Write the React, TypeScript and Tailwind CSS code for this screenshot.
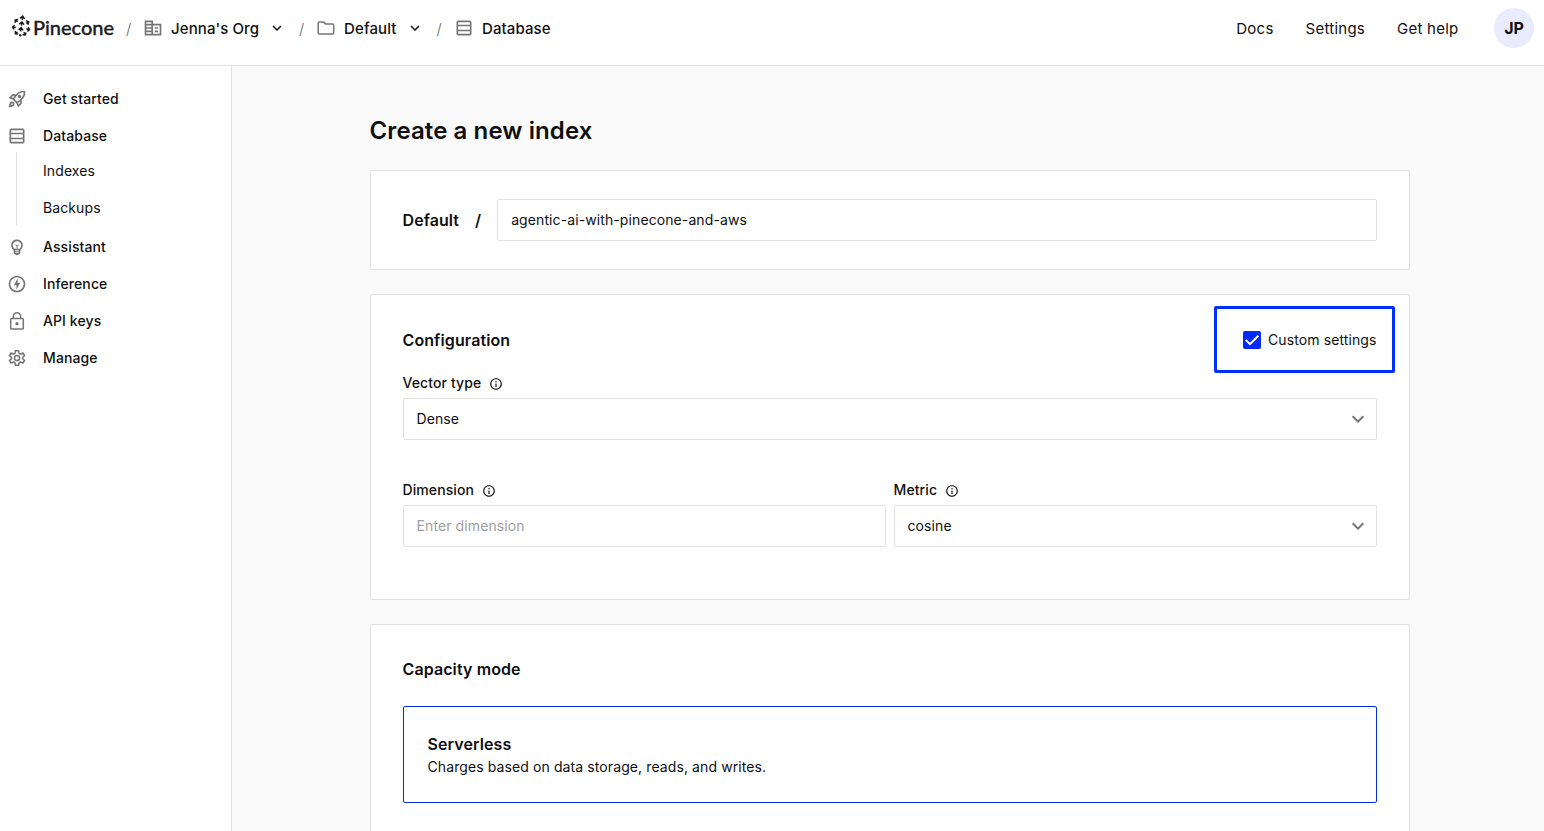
import type { ReactNode } from "react";
import {
  MdOutlineCorporateFare,
  MdOutlineTableRows,
  MdKeyboardArrowDown,
  MdOutlineRocketLaunch,
  MdOutlineEmojiObjects,
  MdOutlineOfflineBolt,
  MdInfoOutline,
} from "react-icons/md";

function Logo() {
  return (
    <div className="-mt-[2px] flex items-center">
      <svg width="20" height="22" viewBox="0 0 20 22" fill="none" stroke="#1c1c1f" strokeWidth="1.5" className="-mt-[2px] shrink-0">
        <path d="M11.2 4.8 L11.6 1.6 M9 3.3 L11.7 1.2 L13.6 3.9" />
        <path d="M10.5 10.6 L10.9 7.4 M8.3 9.2 L11 7 L13 9.6" />
        <path d="M9.6 16.4 L10 13.2 M7.6 14.8 L10.200 12.700 L12.100 15.400" />
        <path d="M6.6 7 L4.800 5.300 M4.100 7.900 L4.300 4.900 L7.200 4.600" />
        <path d="M15.200 8.400 L17.300 7.200 M14.900 5.600 L17.700 6.900 L16.800 9.800" />
        <path d="M4.800 12.600 L2.200 12.200 M3.600 10.200 L1.700 12.200 L2.900 14.500" />
        <path d="M15.300 13.800 L18 14.500 M17.200 12 L18.500 14.600 L16.400 16.300" />
        <path d="M6.500 16.800 L4.800 18.500 M4.300 15.900 L4.400 18.800 L7.200 18.900" />
        <path d="M12.900 17.300 L13.900 19.500 M11.600 19.700 L14.200 19.900 L15 17.500" />
        <circle cx="9.200" cy="20.300" r="1.2" fill="#1c1c1f" stroke="none" />
      </svg>
      <span className="ml-[2px] w-[81px] font-['Lato'] text-[20px] leading-6 font-medium tracking-[-0.03px] whitespace-nowrap text-[#1c1c1f] [-webkit-text-stroke:0.35px_#1c1c1f]">
        Pinecone
      </span>
    </div>
  );
}

function FolderIcon() {
  return (
    <svg width="20" height="20" viewBox="0 0 20 20" fill="none" stroke="#757575" strokeWidth="1.5" strokeLinejoin="round" className="-mt-[1px]">
      <path d="M3.100 4.100h4.500l1.800 1.800h7.300c.6 0 1 .4 1 1v8.100c0 .6-.4 1-1 1H3.100c-.5 0-.9-.4-.9-1V5c0-.5.4-.9.9-.9z" />
    </svg>
  );
}

function LockIcon() {
  return (
    <svg width="20" height="20" viewBox="0 0 20 20" fill="none" stroke="currentColor" strokeWidth="1.5">
      <rect x="3.700" y="7.600" width="12.600" height="10.400" rx="0.800" />
      <path d="M6.300 7.600V5.400a3.700 3.700 0 0 1 7.400 0v2.200" />
      <circle cx="10" cy="12.700" r="1.600" fill="currentColor" stroke="none" />
    </svg>
  );
}

function GearIcon() {
  return (
    <svg width="20" height="20" viewBox="-0.7 -0.7 21.4 21.4" fill="none" stroke="currentColor" strokeWidth="1.65" strokeLinejoin="round">
      <path d="M8.300 2.200h3.400l.3 1.900q.2 1 1.100 1.300.8.400 1.600 0l1.700-.8 1.700 2.900-1.500 1.100q-.8.600-.8 1.400t.8 1.400l1.500 1.100-1.700 2.900-1.700-.8q-.8-.4-1.600 0-.9.300-1.100 1.300l-.3 1.900H8.300L8 15.900q-.2-1-1.100-1.300-.8-.4-1.600 0l-1.700.8-1.700-2.900 1.500-1.100q.8-.6.8-1.400t-.8-1.400L1.900 7.500l1.700-2.900 1.700.8q.8.400 1.600 0Q7.800 5.100 8 4.100z" />
      <circle cx="10" cy="10" r="2.700" />
    </svg>
  );
}

function NavItem({ icon, label }: { icon: ReactNode; label: string }) {
  return (
    <a className="flex h-[37px] items-center pl-[7px] text-sm font-medium tracking-[0.1px]">
      <span className="mr-4 flex size-5 items-center justify-center text-[#757575]">{icon}</span>
      {label}
    </a>
  );
}

function Slash() {
  return <span className="text-[15px] font-light text-[#666]">/</span>;
}

function FieldLabel({ children }: { children: ReactNode }) {
  return (
    <div className="-ml-[0.5px] flex h-5 items-center gap-2 text-sm font-medium tracking-[0.1px]">
      {children}
      <MdInfoOutline size={14} className="mt-[2px]" />
    </div>
  );
}

function SelectBox({ value }: { value: string }) {
  return (
    <div className="mt-[5px] flex h-[42px] items-center justify-between rounded-[2px] border border-[#e2e2e2] bg-white pr-[6px] pl-[12.5px] text-sm tracking-[0.1px]">
      {value}
      <MdKeyboardArrowDown size={24} className="text-[#757575]" />
    </div>
  );
}

export default function App() {
  return (
    <div className="flex h-[831px] w-[1544px] flex-col overflow-hidden bg-[#fafafa] font-['Inter',sans-serif] text-[#0f0f10]">
      <header className="flex h-[66px] shrink-0 items-start justify-between border-b border-[#e2e2e2] bg-white pr-[10px] pl-[11px]">
        <nav className="flex h-14 items-center text-[15px] font-medium tracking-[0.1px]">
          <Logo />
          <div className="mt-[2px] ml-[12px] flex w-[17px]"><Slash /></div>
          <MdOutlineCorporateFare size={20} className="text-[#757575]" />
          <span className="mt-[2px] ml-2">Jenna's Org</span>
          <MdKeyboardArrowDown size={18} className="ml-[9px]" />
          <div className="mt-[2px] ml-[13px] flex w-[17px]"><Slash /></div>
          <FolderIcon />
          <span className="mt-[2px] ml-2">Default</span>
          <MdKeyboardArrowDown size={18} className="ml-[10px]" />
          <div className="mt-[2px] ml-[12px] flex w-[18px]"><Slash /></div>
          <MdOutlineTableRows size={20} className="text-[#757575]" />
          <span className="mt-[2px] ml-[7.5px]">Database</span>
        </nav>
        <div className="flex h-14 items-center text-[15px] tracking-[0.25px]">
          <span className="mt-[2px] mr-8">Docs</span>
          <span className="mt-[2px] mr-8">Settings</span>
          <span className="mt-[2px] mr-[35.5px]">Get help</span>
          <span className="flex size-10 items-center justify-center rounded-full bg-[#e9ebff] text-base font-bold tracking-normal">JP</span>
        </div>
      </header>
      <div className="flex min-h-0 flex-1">
        <aside className="w-[232px] shrink-0 border-r border-[#e2e2e2] bg-white pt-[14px]">
          <NavItem icon={<MdOutlineRocketLaunch size={20} />} label="Get started" />
          <NavItem icon={<MdOutlineTableRows size={20} />} label="Database" />
          <div className="-mt-[2px] mb-[2px] ml-4 border-l border-[#e2e2e2] pl-[26px] text-sm tracking-[0.1px]">
            <div className="flex h-[37px] items-center">Indexes</div>
            <div className="flex h-[37px] items-center">Backups</div>
          </div>
          <NavItem icon={<MdOutlineEmojiObjects size={20} />} label="Assistant" />
          <NavItem icon={<MdOutlineOfflineBolt size={20} />} label="Inference" />
          <NavItem icon={<LockIcon />} label="API keys" />
          <NavItem icon={<GearIcon />} label="Manage" />
        </aside>
        <main className="pt-[49px] pl-[138px]">
          <h1 className="-ml-[0.5px] h-[31px] text-2xl font-semibold tracking-[0.1px]">Create a new index</h1>
          <section className="mt-6 flex h-[100px] w-[1040px] items-center rounded-[2px] border border-[#e2e2e2] bg-white px-8 font-semibold">
            <span className="-ml-[0.5px] tracking-[0.08px]">Default</span>
            <span className="mx-4">/</span>
            <div className="flex h-[42px] flex-1 items-center rounded-[2px] border border-[#e2e2e2] pl-[13px] text-sm font-normal tracking-[0.1px]">
              agentic-ai-with-pinecone-and-aws
            </div>
          </section>
          <section className="mt-6 h-[306px] w-[1040px] rounded-[2px] border border-[#e2e2e2] bg-white px-8 pt-[11px]">
            <div className="flex h-[67px] items-center justify-between">
              <h2 className="-ml-[0.5px] font-semibold tracking-[0.1px]">Configuration</h2>
              <div className="-mr-[18px] flex h-[67px] w-[181px] items-center justify-end rounded-[2px] border-[3px] border-[#0030ff] pr-[15.5px] text-sm tracking-[0.1px]">
                <span className="mr-[7px] flex size-[18px] items-center justify-center rounded-[2px] bg-[#0029ff]">
                  <svg width="18" height="18" viewBox="0 0 18 18" fill="none" stroke="#fff" strokeWidth="2">
                    <path d="M2.700 8.900l4.300 4.200 8.400-8.400" />
                  </svg>
                </span>
                Custom settings
              </div>
            </div>
            <FieldLabel>Vector type</FieldLabel>
            <SelectBox value="Dense" />
            <div className="mt-10 flex gap-2">
              <div className="flex-1">
                <FieldLabel>Dimension</FieldLabel>
                <div className="mt-[5px] flex h-[42px] items-center rounded-[2px] border border-[#e2e2e2] pl-[12.5px] text-sm tracking-[0.1px] text-[#a0a0a0]">
                  Enter dimension
                </div>
              </div>
              <div className="flex-1">
                <FieldLabel>Metric</FieldLabel>
                <SelectBox value="cosine" />
              </div>
            </div>
          </section>
          <section className="mt-6 h-[300px] w-[1040px] rounded-[2px] border border-[#e2e2e2] bg-white px-8 pt-8">
            <h2 className="-ml-[0.5px] leading-6 font-semibold tracking-[0.1px]">Capacity mode</h2>
            <div className="mt-[25px] h-[97px] rounded-[2px] border border-[#002fe6] pt-[25px] pl-[23.5px]">
              <div className="leading-6 font-semibold tracking-[0.1px]">Serverless</div>
              <div className="text-sm leading-[22px] tracking-[0.1px]">Charges based on data storage, reads, and writes.</div>
            </div>
          </section>
        </main>
      </div>
    </div>
  );
}
